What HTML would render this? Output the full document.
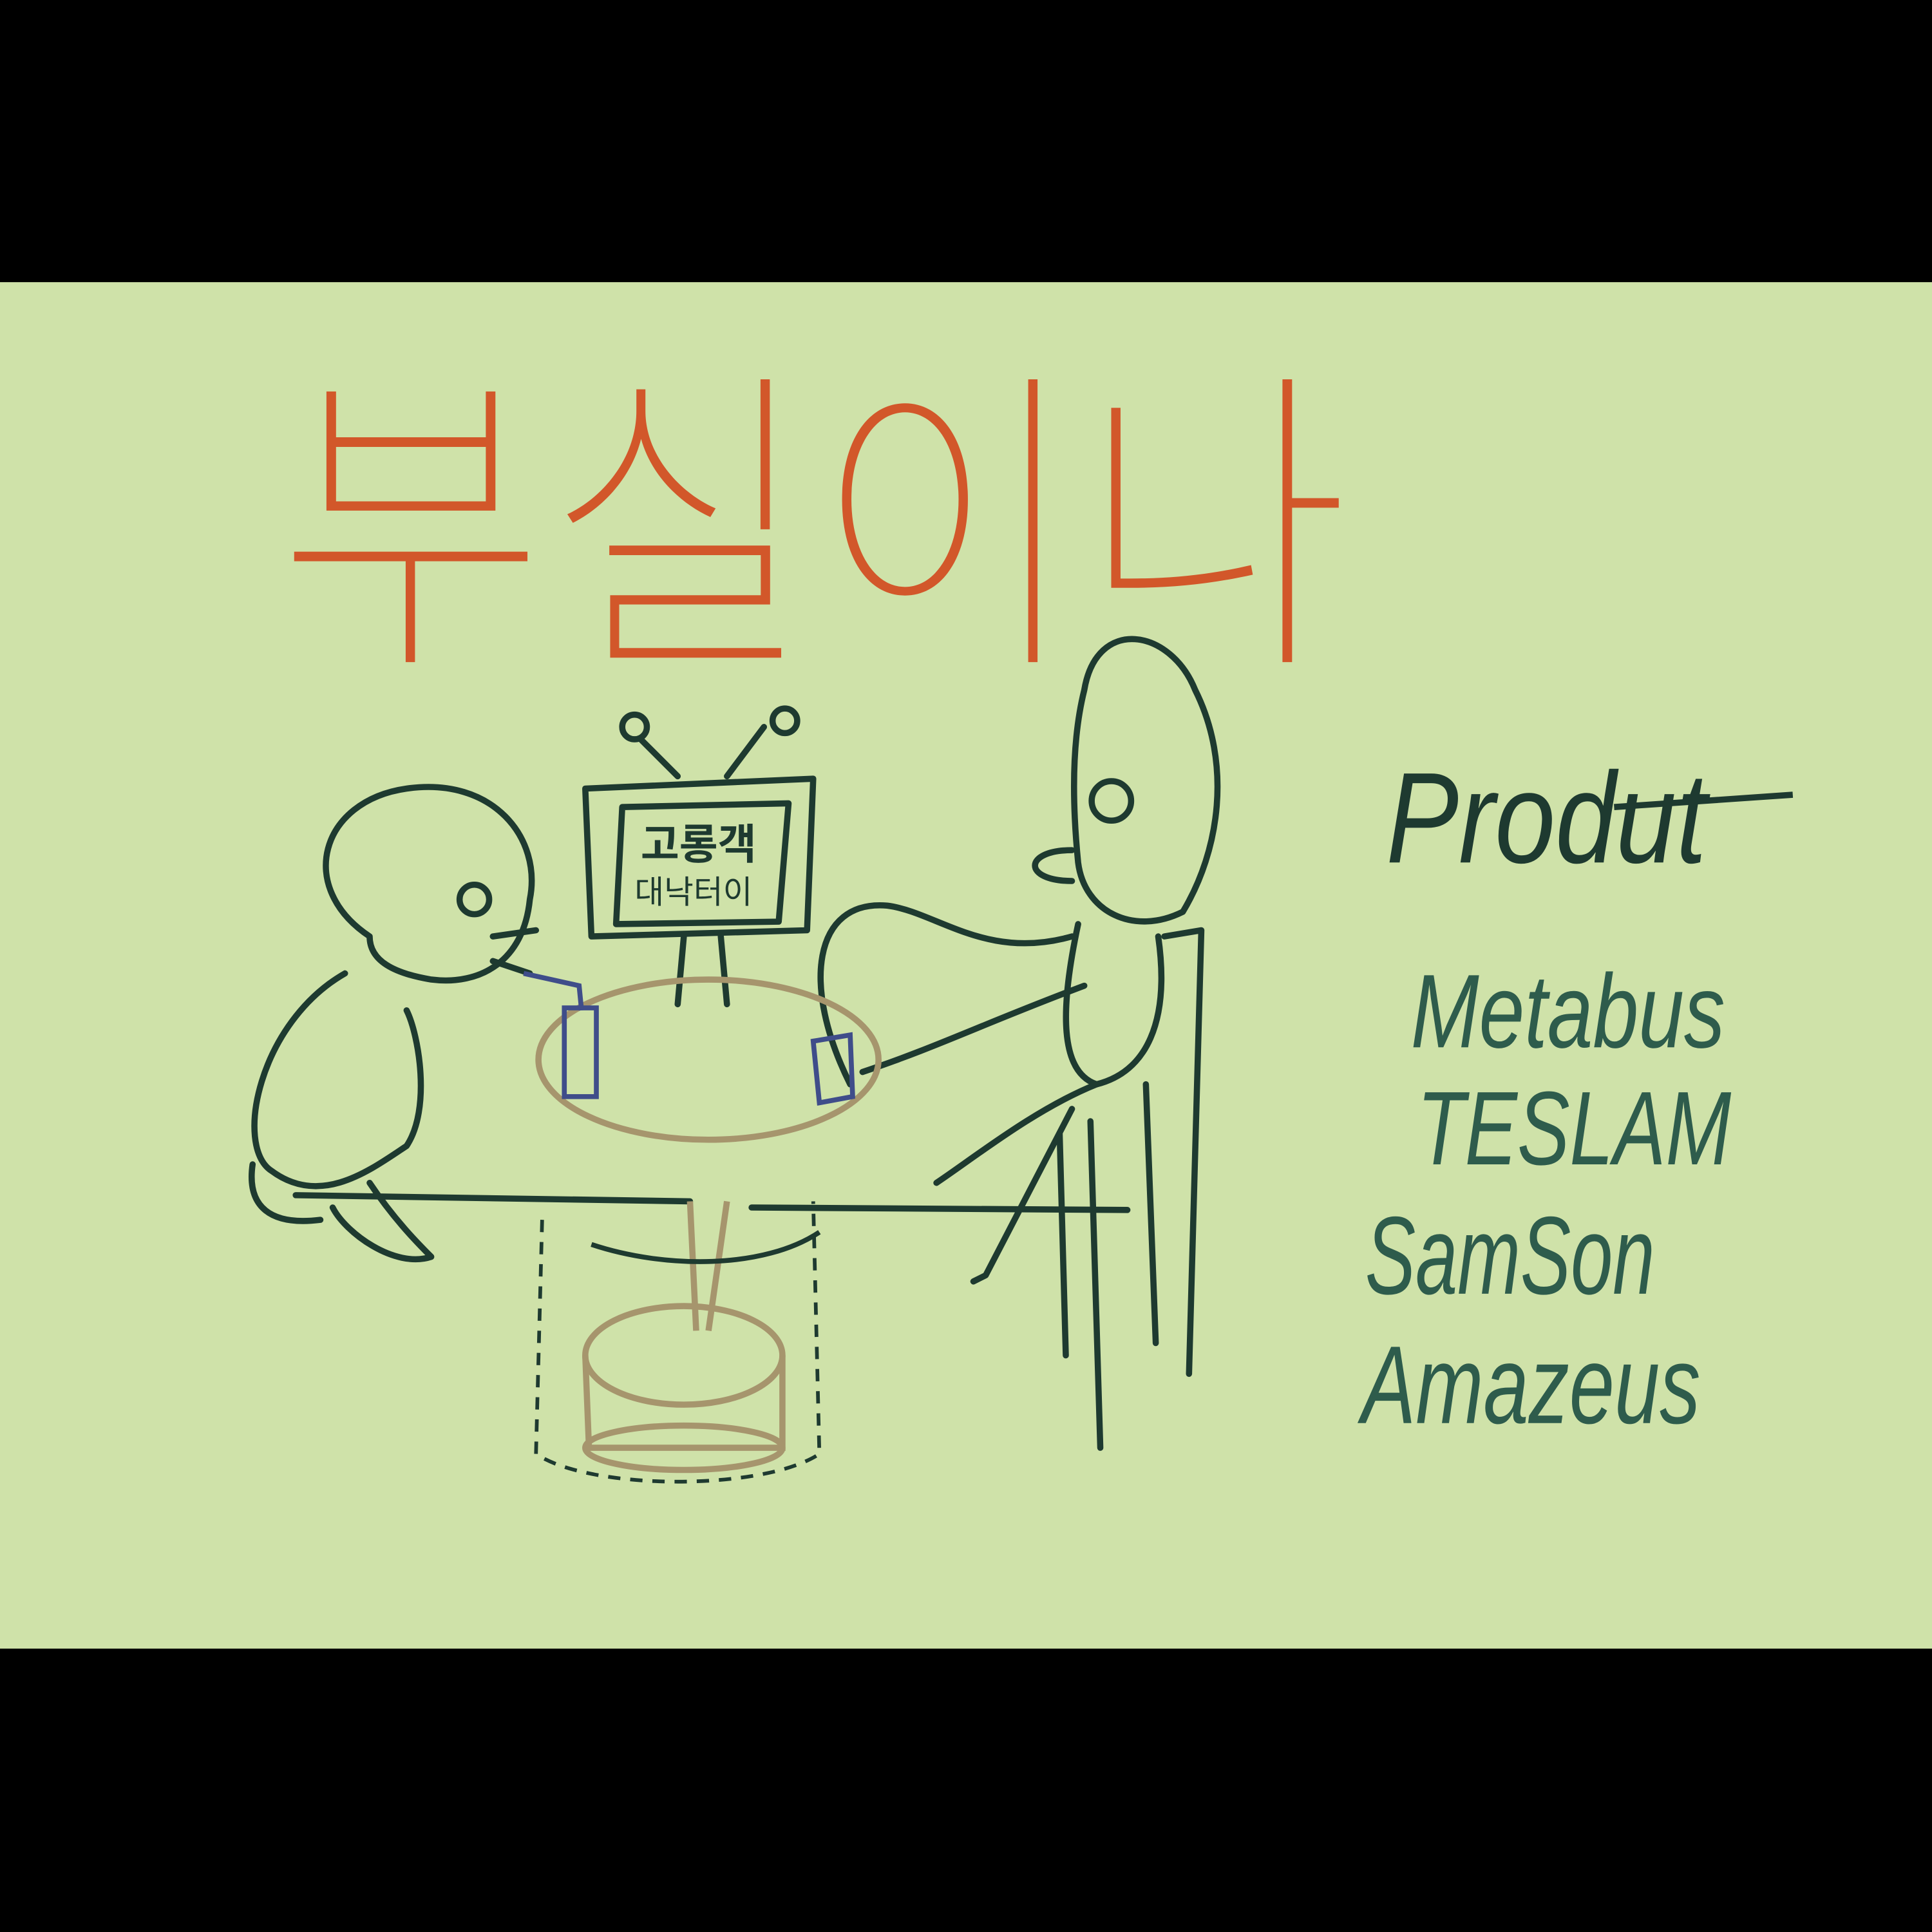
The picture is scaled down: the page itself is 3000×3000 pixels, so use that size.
<!DOCTYPE html>
<html><head><meta charset="utf-8"><style>
html,body{margin:0;padding:0;background:#000;}
svg{display:block;}
</style></head><body>
<svg width="3000" height="3000" viewBox="0 0 1568 1568" xmlns="http://www.w3.org/2000/svg">
<rect width="1568" height="1568" fill="#000"/>
<rect x="0" y="229" width="1568" height="1109" fill="#cfe2a9"/>
<text x="225" y="520" font-family="'Noto Sans CJK KR',sans-serif" font-weight="100" font-size="260" fill="#d2572a" textLength="870" lengthAdjust="spacingAndGlyphs">부실이나</text>
<g fill="none" stroke="#1e3a30" stroke-width="5" stroke-linecap="round" stroke-linejoin="round">
<path d="M300 760 C240 720 260 650 330 640 C400 630 440 680 430 730 C425 780 390 800 350 795 C320 790 300 780 300 760Z"/>
<circle cx="385" cy="730" r="12"/>
<path d="M400 760 L435 755 M400 780 L430 790"/>
<path d="M280 790 C210 830 190 930 220 950 C260 980 300 950 330 930 C350 900 340 840 330 820"/>
<path d="M205 945 C200 980 220 995 260 990 M300 960 C320 990 340 1010 350 1020 C320 1030 280 1000 270 980"/>
<path d="M240 970 L560 975 M610 980 L915 982"/>
<path d="M475 640 L660 632 L655 755 L480 760Z"/>
<path d="M505 655 L640 652 L632 748 L500 750Z"/>
<path d="M520 600 L550 630 M620 590 L590 630"/>
<circle cx="515" cy="590" r="10"/><circle cx="637" cy="585" r="10"/>
<path d="M555 760 L550 815 M585 760 L590 815"/>
<path d="M880 560 C890 500 950 510 970 560 C1000 620 990 690 960 740 C920 760 880 740 875 700 C870 650 870 600 880 560Z"/>
<circle cx="902" cy="650" r="16"/>
<path d="M870 690 C830 690 830 715 870 715"/>
<path d="M875 750 C860 820 860 870 890 880 C930 870 950 830 940 760"/>
<path d="M890 880 C840 900 790 940 760 960 M870 900 L800 1035 L790 1040"/>
<path d="M945 760 L975 755 L965 1115 M860 920 L865 1100 M885 910 L893 1175 M930 880 L938 1090"/>
<path d="M690 880 C650 800 660 730 720 735 C760 740 800 780 870 760"/>
<path d="M700 870 C760 850 800 830 880 800"/>
</g>
<g fill="none" stroke="#a6956d" stroke-width="5">
<ellipse cx="575" cy="860" rx="138" ry="65"/>
<path d="M560 975 L565 1080 M590 975 L575 1080"/>
<ellipse cx="555" cy="1100" rx="80" ry="40"/>
<path d="M475 1100 L478 1175 L635 1175 L635 1100"/>
<ellipse cx="555" cy="1175" rx="80" ry="18"/>
</g>
<g fill="none" stroke="#1e3a30" stroke-width="3" stroke-dasharray="10 8">
<path d="M440 990 L435 1180 C480 1210 620 1210 665 1180 L660 975"/>
</g>
<path d="M480 1010 C540 1030 620 1030 665 1000" fill="none" stroke="#1e3a30" stroke-width="4"/>
<g fill="none" stroke="#3f4d8a" stroke-width="4">
<rect x="458" y="818" width="26" height="72"/><path d="M425 790 L470 800 L472 820"/>
<path d="M660 845 L690 840 L692 890 L665 895Z"/>
</g>
<text x="520" y="697" font-family="Liberation Sans,'Noto Sans CJK KR',sans-serif" font-size="34" fill="#1e3a30" font-weight="bold">고롱객</text>
<text x="515" y="733" font-family="Liberation Sans,'Noto Sans CJK KR',sans-serif" font-size="26" fill="#1e3a30">대낙터이</text>
<path d="M1310 655 L1455 645" stroke="#1e3a30" stroke-width="5"/>
<g font-family="Liberation Sans,sans-serif" font-style="italic">
<text x="1125" y="700" font-size="105" fill="#1e3a30" textLength="260" lengthAdjust="spacingAndGlyphs">Produt</text>
<text x="1145" y="850" font-size="85" fill="#2e5c4c" textLength="255" lengthAdjust="spacingAndGlyphs">Metabus</text>
<text x="1150" y="945" font-size="85" fill="#2e5c4c" textLength="255" lengthAdjust="spacingAndGlyphs">TESLAM</text>
<text x="1108" y="1050" font-size="90" fill="#2e5c4c" textLength="235" lengthAdjust="spacingAndGlyphs">SamSon</text>
<text x="1105" y="1155" font-size="90" fill="#2e5c4c" textLength="275" lengthAdjust="spacingAndGlyphs">Amazeus</text>
</g>
</svg>
</body></html>
